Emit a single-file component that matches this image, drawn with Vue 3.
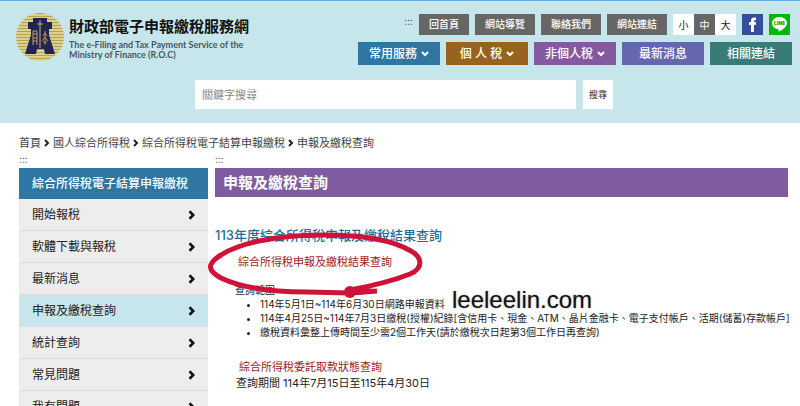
<script setup>
import { ref } from 'vue'

const utilityLinks = ['回首頁', '網站導覽', '聯絡我們', '網站連結']
const sizes = ['小', '中', '大']
const activeSize = ref('中')
const keyword = ref('')

const navItems = [
  { label: '常用服務', tone: 'blue', menu: true },
  { label: '個 人 稅', tone: 'brown', menu: true },
  { label: '非個人稅', tone: 'purple', menu: true },
  { label: '最新消息', tone: 'indigo', menu: false },
  { label: '相關連結', tone: 'teal', menu: false }
]

const crumbs = ['首頁', '國人綜合所得稅', '綜合所得稅電子結算申報繳稅', '申報及繳稅查詢']

const sideItems = [
  '開始報稅',
  '軟體下載與報稅',
  '最新消息',
  '申報及繳稅查詢',
  '統計查詢',
  '常見問題',
  '我有問題'
]
const activeSide = '申報及繳稅查詢'

const ranges = [
  '114年5月1日~114年6月30日網路申報資料',
  '114年4月25日~114年7月3日繳稅(授權)紀錄[含信用卡、現金、ATM、晶片金融卡、電子支付帳戶、活期(儲蓄)存款帳戶]',
  '繳稅資料彙整上傳時間至少需2個工作天(請於繳稅次日起第3個工作日再查詢)'
]
</script>

<template>
  <div class="page">
    <header class="header">
      <div class="header__top">
        <a class="brand" href="#">
          <svg class="brand__logo" viewBox="0 0 48 48" aria-hidden="true">
            <defs>
              <pattern id="stripes" width="48" height="3" patternUnits="userSpaceOnUse">
                <rect width="48" height="3" fill="#dccf94" />
                <rect width="48" height="1" fill="#b7a34c" />
              </pattern>
            </defs>
            <circle cx="24" cy="24" r="24" fill="url(#stripes)" />
            <path d="M17 5h14v4h5v7h-3v6l6 19H29l-1-5h-7l-1 5H9l6-19v-6h-3V9h5z" fill="#20244f" />
            <path d="M24 7v28M21 11h6" stroke="#d3b56e" stroke-width="1" fill="none" />
            <path d="M17 18h4v10h-4zM17 21h4M17 25h4M17 28v4M21 28v4" stroke="#bfa269" stroke-width="1" fill="none" />
            <path d="M29 18v14M27 23l2-3 2 3M26 28l3-4 3 4M27 29h4" stroke="#c88f4c" stroke-width="1" fill="none" />
          </svg>
          <span class="brand__text">
            <strong>財政部電子申報繳稅服務網</strong>
            <small>The e-Filing and Tax Payment Service of the<br>Ministry of Finance (R.O.C)</small>
          </span>
        </a>

        <div class="header__menus">
          <div class="utility">
            <span class="accesskey">:::</span>
            <a v-for="link in utilityLinks" :key="link" class="utility__link" href="#">{{ link }}</a>
            <div class="sizes">
              <button
                v-for="size in sizes"
                :key="size"
                type="button"
                :class="{ 'is-active': size === activeSize }"
                @click="activeSize = size"
              >{{ size }}</button>
            </div>
            <a class="social" href="#" aria-label="Facebook">
              <svg viewBox="0 0 21 21">
                <rect width="21" height="21" fill="#344e9b" />
                <path d="M9 18v-7H7V8h2V6.500C9 4.200 10.300 3.500 12 3.500h2v2.800h-1.300c-.6 0-.8.3-.8.9V8H14l-.3 3h-1.800v7z" fill="#fff" />
              </svg>
            </a>
            <a class="social" href="#" aria-label="LINE">
              <svg viewBox="0 0 21 21">
                <rect width="21" height="21" fill="#05b50a" />
                <path d="M10.500 3C6.300 3 3 5.700 3 9.200c0 3 2.600 5.400 6.200 6 .7.200.3 1.300.3 2.300 2.300-.8 8.500-4.300 8.500-8.300C18 5.700 14.700 3 10.500 3z" fill="#fff" />
                <text x="10.500" y="11" text-anchor="middle" class="social__line">LINE</text>
              </svg>
            </a>
          </div>
          <nav class="nav">
            <a v-for="item in navItems" :key="item.label" href="#" class="nav__item" :class="`is-${item.tone}`">
              {{ item.label }}
              <svg v-if="item.menu" class="nav__caret" viewBox="0 0 8 6"><path d="M1 1l3 3 3-3" /></svg>
            </a>
          </nav>
        </div>
      </div>

      <form class="search" @submit.prevent>
        <input v-model="keyword" type="text" placeholder="關鍵字搜尋" aria-label="關鍵字搜尋">
        <button type="submit">搜尋</button>
      </form>
    </header>

    <nav class="crumbs">
      <template v-for="(crumb, i) in crumbs" :key="crumb">
        <svg v-if="i > 0" class="chevron" viewBox="0 0 6 8"><path d="M1 1l3 3-3 3" /></svg>
        <a href="#">{{ crumb }}</a>
      </template>
    </nav>

    <div class="columns">
      <aside class="side">
        <span class="accesskey">:::</span>
        <h2>綜合所得稅電子結算申報繳稅</h2>
        <ul>
          <li v-for="item in sideItems" :key="item">
            <a href="#" :class="{ 'is-active': item === activeSide }">
              {{ item }}
              <svg class="chevron" viewBox="0 0 6 8"><path d="M1 1l3 3-3 3" /></svg>
            </a>
          </li>
        </ul>
      </aside>

      <main class="main">
        <span class="accesskey">:::</span>
        <h1>申報及繳稅查詢</h1>
        <h2>113年度綜合所得稅申報及繳稅結果查詢</h2>
        <section class="query">
          <a class="query__link" href="#">綜合所得稅申報及繳稅結果查詢</a>
          <p class="query__range">查詢範圍</p>
          <ul>
            <li v-for="range in ranges" :key="range">{{ range }}</li>
          </ul>
          <svg class="query__mark" viewBox="0 0 216 68" aria-hidden="true">
            <path d="M143 57C170 52 188 47 203 41C217 35 215 24 204 18C182 5 150 2 118 2C70 2 32 10 14 22C-1 31 1 38 14 45C35 55 65 59 100 59L143 60L165 58" />
            <path d="M143 60L170 58" />
            <circle cx="143" cy="59" r="6" />
          </svg>
          <span class="query__site">leeleelin.com</span>
        </section>
        <section class="entrust">
          <a class="query__link" href="#">綜合所得稅委託取款狀態查詢</a>
          <p>查詢期間 114年7月15日至115年4月30日</p>
        </section>
      </main>
    </div>
  </div>
</template>

<style>
body {
  background: #fff;
}
</style>

<style scoped>
.page {
  height: 100vh;
  overflow: hidden;
  color: #222;
  font-family: Inter, "Noto Sans CJK TC", sans-serif;
  font-size: 11px;
  line-height: 16px;
}

a {
  color: inherit;
  text-decoration: none;
}

h1,
h2,
p,
ul {
  margin: 0;
  padding: 0;
}

button,
input {
  box-sizing: border-box;
  padding: 0;
  border: 0;
  border-radius: 0;
  background: #fff;
  color: #222;
  font-family: inherit;
}

.accesskey {
  display: block;
  color: #555;
  font-size: 10px;
  line-height: 14px;
}

.header {
  padding: 12px 8px 14px 16px;
  border-top: 1px solid #5fb2cf;
  background: #c6e6ec;
}

.header__top {
  display: flex;
  justify-content: space-between;
}

.brand {
  display: flex;
  gap: 5px;
}

.brand__logo {
  width: 48px;
  height: 48px;
}

.brand__text {
  display: flex;
  flex-direction: column;
  padding-top: 4px;
  white-space: nowrap;
}

.brand strong {
  color: #111;
  font-size: 15px;
  font-weight: 700;
  line-height: 20px;
}

.brand small {
  padding-top: 3px;
  color: #47585f;
  font-family: Lato, sans-serif;
  font-size: 9px;
  font-weight: 700;
  line-height: 10px;
}

.header__menus {
  display: flex;
  flex-direction: column;
  gap: 7px;
  padding-top: 1px;
}

.utility {
  display: flex;
  justify-content: flex-end;
  gap: 6px;
  padding-right: 2px;
}

.utility__link {
  padding: 0 10px;
  background: #666;
  color: #fff;
  font-size: 10px;
  font-weight: 500;
  line-height: 21px;
}

.sizes {
  display: flex;
}

.sizes button {
  width: 21px;
  height: 21px;
  font-size: 10px;
}

.sizes .is-active {
  background: #666;
  color: #fff;
}

.social,
.social svg {
  display: block;
  width: 21px;
  height: 21px;
}

.social__line {
  fill: #05b50a;
  font-size: 5px;
  font-weight: 900;
}

.nav {
  display: flex;
  gap: 6px;
}

.nav__item {
  display: flex;
  align-items: center;
  justify-content: center;
  gap: 4px;
  width: 82px;
  height: 23px;
  color: #fff;
  font-size: 12px;
  font-weight: 500;
}

.nav__item.is-blue {
  background: #2f76a3;
}

.nav__item.is-brown {
  background: #98631d;
}

.nav__item.is-purple {
  background: #835a9f;
}

.nav__item.is-indigo {
  background: #6467ae;
}

.nav__item.is-teal {
  background: #387b77;
}

.nav__caret {
  width: 8px;
  height: 6px;
  fill: none;
  stroke: #fff;
  stroke-width: 2;
}

.search {
  display: flex;
  gap: 7px;
  margin: 15px 179px 0;
}

.search input {
  flex: 1;
  min-width: 0;
  height: 29px;
  padding: 0 7px;
  font-size: 11px;
}

.search input::placeholder {
  color: #888;
}

.search button {
  width: 30px;
  height: 29px;
  font-size: 9px;
}

.chevron {
  width: 6px;
  height: 8px;
  fill: none;
  stroke: #222;
  stroke-width: 2;
}

.crumbs {
  display: flex;
  align-items: center;
  gap: 3px;
  padding: 12px 19px 0;
  color: #444;
}

.columns {
  display: flex;
  gap: 7px;
  padding: 0 12px 0 19px;
}

.side {
  flex: none;
  width: 189px;
  padding-top: 1px;
}

.side h2 {
  margin-top: 2px;
  padding: 0 13px;
  background: #2f76a3;
  color: #fff;
  font-size: 12px;
  font-weight: 500;
  line-height: 31px;
}

.side ul {
  list-style: none;
}

.side li a {
  display: flex;
  align-items: center;
  justify-content: space-between;
  height: 31px;
  padding: 0 12px 0 13px;
  border-bottom: 1px solid #dcdcdc;
  background: #ededed;
  font-size: 12px;
}

.side li .is-active {
  background: #c6e6ec;
}

.side .chevron {
  width: 8px;
  height: 10px;
  stroke: #111;
}

.main {
  flex: 1;
  min-width: 0;
  padding-top: 1px;
}

.main h1 {
  margin-top: 2px;
  padding: 0 8px;
  background: #7f5b9f;
  color: #fff;
  font-size: 15px;
  font-weight: 700;
  line-height: 29px;
}

.main h2 {
  margin-top: 28px;
  color: #1f6c9b;
  font-size: 13px;
  font-weight: 500;
  line-height: 20px;
}

.query {
  position: relative;
  padding: 9px 0 0 20px;
}

.query__link {
  display: block;
  padding-left: 3px;
  color: #9c1c22;
}

.query__range {
  margin-top: 13px;
  font-size: 10px;
  line-height: 14px;
}

.query ul {
  padding-left: 25px;
  font-size: 10px;
  line-height: 14px;
  white-space: nowrap;
}

.query__mark {
  position: absolute;
  top: -12px;
  left: -8px;
  width: 216px;
  height: 68px;
  overflow: visible;
}

.query__mark path {
  fill: none;
  stroke: #cf1238;
  stroke-width: 5;
  stroke-linejoin: round;
}

.query__mark circle {
  fill: #cf1238;
}

.query__site {
  position: absolute;
  top: 41px;
  left: 237px;
  color: #111;
  font-family: "Liberation Sans", Arial, sans-serif;
  font-size: 24px;
  line-height: 28px;
  text-shadow: 0 0 2px #999;
}

.entrust {
  padding: 20px 0 0 21px;
}
</style>
